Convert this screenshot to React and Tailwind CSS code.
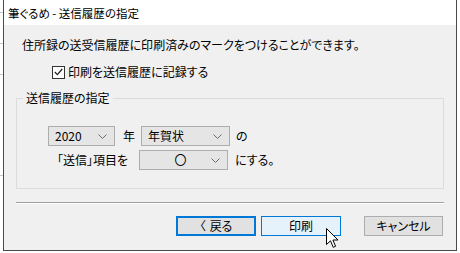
const Chevron = () => (
  <svg width="9" height="5" viewBox="0 0 9 5" className="shrink-0">
    <path d="M0.5 0.5 L4.5 4.5 L8.5 0.5" fill="none" stroke="#6d6d6d" strokeWidth="1" />
  </svg>
)

const Select = ({ value, className, center }) => (
  <div
    className={`flex h-[20px] items-center border border-[#adadad] bg-[#e5e5e5] pr-[7px] ${className}`}
  >
    <span className={`flex-1 ${center ? 'text-center pl-[10px]' : 'pl-[6px]'}`}>{value}</span>
    <Chevron />
  </div>
)

const Cursor = () => (
  <svg width="13" height="21" viewBox="0 0 13 21" className="absolute left-[326px] top-[228px]">
    <path
      d="M0.5 0.5 L0.5 16.5 L4.5 12.8 L7.2 19.3 L9.6 18.3 L6.9 12 L12 12 Z"
      fill="#fff"
      stroke="#000"
      strokeWidth="1"
      strokeLinejoin="miter"
    />
  </svg>
)

export default function App() {
  return (
    <div
      className="relative flex h-[253px] w-[460px] items-start overflow-hidden bg-white text-[12px] leading-[16px] text-black [font-feature-settings:'palt']"
      style={{ fontFamily: '"Noto Sans CJK JP", "Noto Sans", sans-serif' }}
    >
      {/* 背景のウィンドウ（左端） */}
      <div className="flex h-full w-[3px] flex-col bg-white">
        <div className="mt-[12px] h-px bg-[#c8c8c8]" />
        <div className="mt-[30px] h-px bg-[#c8c8c8]" />
        <div className="mt-[30px] h-px bg-[#c8c8c8]" />
        <div className="mt-[100px] h-px bg-[#c8c8c8]" />
      </div>

      {/* ダイアログ本体 */}
      <div className="flex h-[251px] w-[454px] flex-col border-x border-b border-[#4a4a4a]">
        <div className="flex h-[25px] items-center bg-white pl-[4px] text-[11.5px]">
          筆ぐるめ - 送信履歴の指定
        </div>

        <div className="flex flex-1 flex-col bg-[#f0f0f0] px-[12px]">
          <p className="mt-[12px] pl-[6px]">住所録の送受信履歴に印刷済みのマークをつけることができます。</p>

          <label className="mt-[11px] flex items-center pl-[36px]">
            <span className="mr-[3px] flex h-[13px] w-[13px] items-center justify-center border border-[#333] bg-white">
              <svg width="9" height="8" viewBox="0 0 9 8">
                <path d="M0.8 4 L3.4 6.6 L8.2 1" fill="none" stroke="#222" strokeWidth="1.3" />
              </svg>
            </span>
            印刷を送信履歴に記録する
          </label>

          {/* グループボックス */}
          <div className="relative mt-[18px] h-[91px] border border-[#dcdcdc]">
            <span className="absolute -top-[9px] left-[6px] bg-[#f0f0f0] px-[3px]">送信履歴の指定</span>

            <div className="mt-[27px] flex items-center">
              <Select value="2020" className="ml-[31px] w-[67px]" />
              <span className="ml-[8px]">年</span>
              <Select value="年賀状" className="ml-[6px] w-[89px]" />
              <span className="ml-[6px]">の</span>
            </div>

            <div className="mt-[4px] flex items-center">
              <span className="ml-[40px]">「送信」項目を</span>
              <Select value="〇" center className="ml-[11px] w-[89px]" />
              <span className="ml-[7px]">にする。</span>
            </div>
          </div>

          <div className="mt-[13px] h-[2px] border-t border-b border-t-[#a0a0a0] border-b-white" />

          <div className="mt-[12px] flex justify-end pr-[1px]">
            <button className="flex h-[20px] w-[80px] items-center justify-center border-2 border-[#0078d7] bg-[#e1e1e1]">
              <span className="mr-[4px]">〈</span>戻る
            </button>
            <button className="ml-[5px] h-[20px] w-[80px] border border-[#0078d7] bg-[#e5f1fb]">印刷</button>
            <button className="ml-[23px] h-[20px] w-[79px] border border-[#adadad] bg-[#e1e1e1]">キャンセル</button>
          </div>
        </div>
      </div>

      {/* 背景のウィンドウ（右端） */}
      <div className="h-full w-[3px] bg-white" />

      <Cursor />
    </div>
  )
}
